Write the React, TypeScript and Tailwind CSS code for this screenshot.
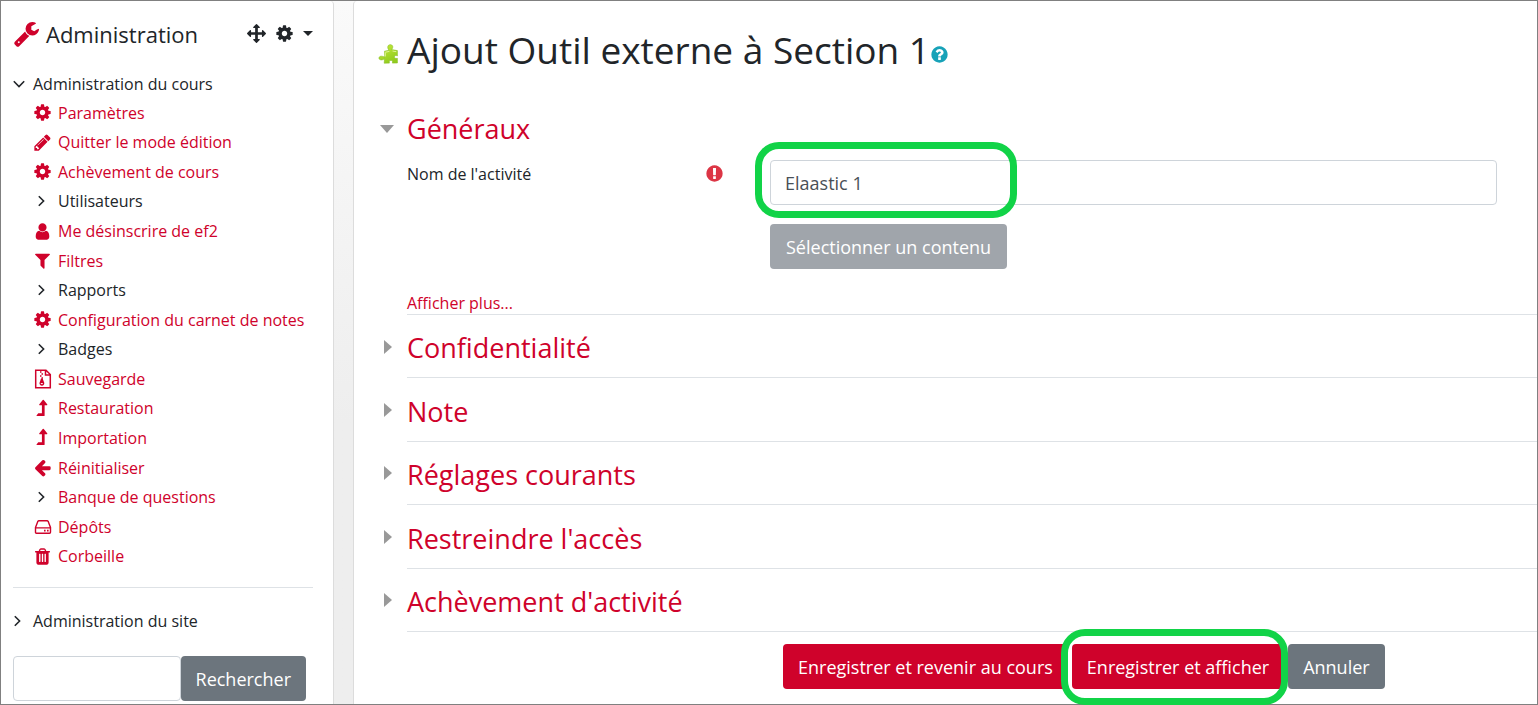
import type { ReactNode } from "react";

const paths = {
  cog: "M1152 896q0-106-75-181t-181-75-181 75-75 181 75 181 181 75 181-75 75-181zm512-109v222q0 12-8 23t-20 13l-185 28q-19 54-39 91 35 50 107 138 10 12 10 25t-9 23q-27 37-99 108t-94 71q-12 0-26-9l-138-108q-44 23-91 38-16 136-29 186-7 28-36 28h-222q-14 0-24.5-8.5t-11.5-21.5l-28-184q-49-16-90-37l-141 107q-10 9-25 9-14 0-25-11-126-114-165-168-7-10-7-23 0-12 8-23 15-21 51-66.5t54-70.5q-27-50-41-99l-183-27q-13-2-21-12.5t-8-23.5v-222q0-12 8-23t19-13l186-28q14-46 39-92-40-57-107-138-10-12-10-24 0-10 9-23 26-36 98.5-107.5t94.5-71.5q13 0 26 10l138 107q44-23 91-38 16-136 29-186 7-28 36-28h222q14 0 24.5 8.5t11.5 21.5l28 184q49 16 90 37l142-107q9-9 24-9 13 0 25 10 129 119 165 170 7 8 7 22 0 12-8 23-15 21-51 66.5t-54 70.5q26 50 41 98l183 28q13 2 21 12.5t8 23.5z",
  arrows:
    "M1792 896q0 26-19 45l-256 256q-19 19-45 19t-45-19-19-45v-128h-384v384h128q26 0 45 19t19 45-19 45l-256 256q-19 19-45 19t-45-19l-256-256q-19-19-19-45t19-45 45-19h128v-384h-384v128q0 26-19 45t-45 19-45-19l-256-256q-19-19-19-45t19-45l256-256q19-19 45-19t45 19 19 45v128h384v-384h-128q-26 0-45-19t-19-45 19-45l256-256q19-19 45-19t45 19l256 256q19 19 19 45t-19 45-45 19h-128v384h384v-128q0-26 19-45t45-19 45 19l256 256q19 19 19 45z",
  pencil:
    "M491 1536l91-91-235-235-91 91v107h128v128h107zm523-928q0-22-22-22-10 0-17 7l-542 542q-7 7-7 17 0 22 22 22 10 0 17-7l542-542q7-7 7-17zm-54-192l416 416-832 832h-416v-416zm683 96q0 53-37 90l-166 166-416-416 166-165q36-38 90-38 53 0 91 38l235 234q37 39 37 91z",
  user: "M1536 1399q0 109-62.5 187t-150.5 78h-854q-88 0-150.5-78t-62.5-187q0-85 8.5-160.5t31.5-152 58.5-131 94-89 134.5-34.5q131 128 313 128t313-128q76 0 134.5 34.5t94 89 58.5 131 31.5 152 8.5 160.5zm-256-887q0 159-112.5 271.5t-271.5 112.5-271.5-112.5-112.5-271.5 112.5-271.5 271.5-112.5 271.5 112.5 112.5 271.5z",
  filter:
    "M1595 295q17 41-14 70l-493 493v742q0 42-39 59-13 5-25 5-27 0-45-19l-256-256q-19-19-19-45v-486l-493-493q-31-29-14-70 17-39 59-39h1280q42 0 59 39z",
  trash:
    "M704 1376v-704q0-14-9-23t-23-9h-64q-14 0-23 9t-9 23v704q0 14 9 23t23 9h64q14 0 23-9t9-23zm256 0v-704q0-14-9-23t-23-9h-64q-14 0-23 9t-9 23v704q0 14 9 23t23 9h64q14 0 23-9t9-23zm256 0v-704q0-14-9-23t-23-9h-64q-14 0-23 9t-9 23v704q0 14 9 23t23 9h64q14 0 23-9t9-23zm-544-992h448l-48-117q-7-9-17-11h-317q-10 2-17 11zm928 32v64q0 14-9 23t-23 9h-96v948q0 83-47 143.5t-113 60.5h-832q-66 0-113-58.5t-47-141.5v-952h-96q-14 0-23-9t-9-23v-64q0-14 9-23t23-9h309l70-167q15-37 54-63t79-26h320q40 0 79 26t54 63l70 167h309q14 0 23 9t9 23z",
  back: "M1664 896v128q0 53-32.5 90.5t-84.5 37.5h-704l293 294q38 36 38 90t-38 90l-75 76q-37 37-90 37-52 0-91-37l-651-652q-37-37-37-90 0-52 37-91l651-650q38-38 91-38 52 0 90 38l75 74q38 38 38 91t-38 91l-293 293h704q52 0 84.5 37.5t32.5 90.5z",
  levelUp:
    "M1345 557q-18 35-57 35h-192v976q0 14-9 23t-23 9h-704q-21 0-29-18-8-20 4-35l160-192q9-11 25-11h320v-752h-192q-40 0-58-37-17-37 9-68l320-384q18-22 49-22t49 22l320 384q27 32 8 70z",
  wrench:
    "M448 1472q0-26-19-45t-45-19-45 19-19 45 19 45 45 19 45-19 19-45zm644-420l-682 682q-37 37-90 37-52 0-91-37l-106-108q-38-36-38-90 0-53 38-91l681-681q39 98 114.5 173.5t173.5 114.5zm634-435q0 39-23 106-47 134-164.5 217.500t-258.500 83.500q-185 0-316.500-131.500t-131.500-316.500 131.500-316.500 316.500-131.500q58 0 121.500 16.500t107.500 46.500q16 11 16 28t-16 28l-293 169v224l193 107q5-3 79-48.500t135.500-81 70.500-35.500q15 0 23.500 10t8.500 25z",
  question:
    "M1024 1376v-192q0-14-9-23t-23-9h-192q-14 0-23 9t-9 23v192q0 14 9 23t23 9h192q14 0 23-9t9-23zm256-672q0-88-55.5-163t-138.5-116-170-41q-243 0-371 213-15 24 8 42l132 100q7 6 19 6 16 0 25-12 53-68 86-92 34-24 86-24 48 0 85.5 26t37.5 59q0 38-20 61t-68 45q-63 28-115.5 86.5t-52.5 125.5v36q0 14 9 23t23 9h192q14 0 23-9t9-23q0-19 21.5-49.5t54.5-49.5q32-18 49-28.5t46-35 44.5-48 28-60.5 12.5-81zm384 192q0 209-103 385.5t-279.5 279.5-385.5 103-385.5-103-279.5-279.5-103-385.5 103-385.5 279.5-279.5 385.5-103 385.5 103 279.5 279.5 103 385.5z",
  exclamation:
    "M896 128q209 0 385.5 103t279.5 279.5 103 385.5-103 385.5-279.5 279.5-385.5 103-385.5-103-279.5-279.5-103-385.5 103-385.5 279.5-279.5 385.5-103zm128 1247v-190q0-14-9-23.5t-22-9.5h-192q-13 0-23 10t-10 23v190q0 13 10 23t23 10h192q13 0 22-9.5t9-23.5zm-2-344l18-621q0-12-10-18-10-8-24-8h-220q-14 0-24 8-10 6-10 18l17 621q0 10 10 17.5t24 7.5h185q14 0 23.5-7.5t10.5-17.5z",
};

type GlyphName = keyof typeof paths;

function Glyph({ name, className = "size-[19px]" }: { name: GlyphName; className?: string }) {
  return (
    <svg viewBox="0 0 1792 1792" fill="currentColor" aria-hidden="true" className={`shrink-0 ${className}`}>
      <path d={paths[name]} />
    </svg>
  );
}

function Chevron({ down = false }: { down?: boolean }) {
  return (
    <svg viewBox="0 0 12 12" fill="none" stroke="#212529" strokeWidth="1.6" aria-hidden="true" className="size-3 shrink-0">
      <path d={down ? "M0.8 3.3 6 8.5 11.2 3.3" : "M1.8 1.2 6.6 6 1.8 10.8"} />
    </svg>
  );
}

function ZipFile() {
  return (
    <svg viewBox="0 0 18 20" fill="none" stroke="currentColor" strokeWidth="1.5" aria-hidden="true" className="h-5 w-[18px] shrink-0">
      <path d="M1.7 1.2H12L16.3 5.5V18.8H1.7zM11.5 1.5V6H16" />
      <path d="M6 3h1.5M7.5 5H9M6 7h1.5M7.5 9H9" strokeWidth="1.3" />
      <path d="M7 9.5h1.6l1.6 4.2a2.4 2.4 0 1 1-4.6 0z" fill="currentColor" stroke="none" />
      <path d="M6.8 14.6h2" stroke="#fff" strokeWidth="1" />
    </svg>
  );
}

function Drive() {
  return (
    <svg viewBox="0 0 18 16" fill="none" stroke="currentColor" strokeWidth="1.4" aria-hidden="true" className="h-4 w-[18px] shrink-0">
      <path d="M1.5 8.5 3.8 2.6Q4.1 1.7 5 1.7h8Q13.9 1.7 14.2 2.6L16.5 8.5v4.8q0 1-1 1h-13q-1 0-1-1zM1.5 8.9h15" />
      <path d="M10 11.6h1.6M13 11.6h1.6" strokeWidth="1.6" />
    </svg>
  );
}

function Puzzle() {
  return (
    <svg viewBox="0 0 20 22" aria-hidden="true" className="h-[22px] w-5 shrink-0">
      <defs>
        <linearGradient id="puzzle-fill" x1="0" y1="0" x2="0.5" y2="1">
          <stop offset="0" stopColor="#c8ec3c" />
          <stop offset="1" stopColor="#92cc1e" />
        </linearGradient>
      </defs>
      <path
        d="M6.500 8.200 11 7.300C9.600 5.800 9.300 3.500 10.500 2.300c1.100-1.100 3.300-.8 4 .5.600 1.300.1 2.600-.9 3.800l5.800 1v5.300c-1.300-.7-2.700-.5-3 .8-.3 1.500 1.200 2 3 1.600v4.700l-5 .1c.4-1.500.1-2.800-1.400-2.800s-2.100 1.300-1.600 2.800l-5.200.1.300-4.400c-1.500 1.300-3.800 1.500-5.100.4-.8-.8-.5-2.300.7-2.800 1.500-.6 3.200.2 4.600.6z"
        fill="url(#puzzle-fill)"
        stroke="#86bd22"
        strokeWidth="0.6"
      />
      <path d="M7.400 9.200l4-.8M14.500 8l3.800.7M7.300 9.500v4" stroke="#e6f7a0" strokeWidth="0.900" fill="none" />
    </svg>
  );
}

type Entry = { label: string; icon: ReactNode; plain?: boolean };

const entries: Entry[] = [
  { label: "Paramètres", icon: <Glyph name="cog" /> },
  { label: "Quitter le mode édition", icon: <Glyph name="pencil" /> },
  { label: "Achèvement de cours", icon: <Glyph name="cog" /> },
  { label: "Utilisateurs", icon: <Chevron />, plain: true },
  { label: "Me désinscrire de ef2", icon: <Glyph name="user" /> },
  { label: "Filtres", icon: <Glyph name="filter" /> },
  { label: "Rapports", icon: <Chevron />, plain: true },
  { label: "Configuration du carnet de notes", icon: <Glyph name="cog" /> },
  { label: "Badges", icon: <Chevron />, plain: true },
  { label: "Sauvegarde", icon: <ZipFile /> },
  { label: "Restauration", icon: <Glyph name="levelUp" /> },
  { label: "Importation", icon: <Glyph name="levelUp" /> },
  { label: "Réinitialiser", icon: <Glyph name="back" /> },
  { label: "Banque de questions", icon: <Chevron /> },
  { label: "Dépôts", icon: <Drive /> },
  { label: "Corbeille", icon: <Glyph name="trash" /> },
];

const sections = ["Confidentialité", "Note", "Réglages courants", "Restreindre l'accès", "Achèvement d'activité"];

function Sidebar() {
  return (
    <aside className="w-[333px] shrink-0 rounded-tr border-r border-[#dcdcdc] bg-white px-3">
      <header className="flex h-[68px] items-center">
        <Glyph name="wrench" className="mb-1 size-[27px] text-[#cf022b]" />
        <h2 className="ml-[6px] pb-[2px] text-[22px]">Administration</h2>
        <div className="ml-auto flex items-center gap-[9px] pr-2 pb-1">
          <button type="button" aria-label="Déplacer">
            <Glyph name="arrows" />
          </button>
          <button type="button" aria-label="Actions" className="flex items-center gap-[9px]">
            <Glyph name="cog" />
            <svg viewBox="0 0 10 5" fill="currentColor" aria-hidden="true" className="h-[5px] w-2.5">
              <path d="M0 0h10L5 5z" />
            </svg>
          </button>
        </div>
      </header>
      <nav aria-label="Administration">
        <button type="button" className="flex h-[29px] items-center gap-2">
          <Chevron down />
          Administration du cours
        </button>
        <ul className="grid h-[473px] auto-rows-fr">
          {entries.map((e) => (
            <li key={e.label} className="flex items-center pl-5">
              <a href="#" className={`flex items-center gap-[6px] ${e.plain ? "" : "text-[#cf022b]"}`}>
                <span className="flex w-[19px] justify-center">{e.icon}</span>
                {e.label}
              </a>
            </li>
          ))}
        </ul>
        <hr className="mt-4 mr-2 border-[#dee2e6]" />
        <button type="button" className="mt-[19px] flex h-[28px] items-center gap-2 text-left">
          <Chevron />
          Administration du site
        </button>
      </nav>
      <form className="mt-[21px] mr-[15px] flex" onSubmit={(e) => e.preventDefault()}>
        <input
          type="text"
          aria-label="Rechercher dans l'administration"
          className="h-[45px] min-w-0 flex-1 rounded border border-[#ced4da] px-[15px] text-lg"
        />
        <button type="submit" className="h-[45px] rounded bg-[#6c757d] px-[15px] text-lg text-white">
          Rechercher
        </button>
      </form>
    </aside>
  );
}

export default function App() {
  return (
    <div className="flex min-h-screen border border-[#808080] bg-linear-to-b from-[#fafafa] to-[#eeeeee] to-60% font-['Open_Sans',sans-serif] text-base text-[#212529]">
      <Sidebar />
      <main className="ml-[19px] min-w-0 flex-1 rounded-tl border-l border-[#dcdcdc] bg-white pl-6">
        <div className="flex h-[100px] items-center pb-[2px]">
          <div className="w-[29px] pt-2">
            <Puzzle />
          </div>
          <h1 className="text-[37px]">Ajout Outil externe à Section 1</h1>
          <button type="button" aria-label="Aide" className="mt-2 text-[#17a2b8]">
            <Glyph name="question" />
          </button>
        </div>
        <form onSubmit={(e) => e.preventDefault()}>
          <section>
            <button type="button" className="flex h-[56px] items-center text-[27px] text-[#cf022b]">
              <span className="flex w-[29px] pl-[2px]">
                <svg viewBox="0 0 14 8" aria-hidden="true" className="h-2 w-3.5">
                  <path d="M0 0h14L7 8z" fill="#999" />
                </svg>
              </span>
              Généraux
            </button>
            <div className="ml-[29px] grid grid-cols-[363px_1fr] pr-10">
              <div className="flex h-[33px] items-center justify-between pr-[46px]">
                <label htmlFor="activity">Nom de l'activité</label>
                <Glyph name="exclamation" className="size-[19px] text-[#dc3545]" />
              </div>
              <div>
                <div className="relative mt-[3px]">
                  <input
                    id="activity"
                    type="text"
                    defaultValue="Elaastic 1"
                    className="block h-[45px] w-full rounded border border-[#ced4da] px-[14px] text-lg text-[#495057]"
                  />
                  <span className="pointer-events-none absolute -top-[18px] -left-[15px] h-[76px] w-[262px] rounded-3xl border-[7px] border-[#11d347]" />
                </div>
                <button type="button" className="mt-[19px] block h-[45px] rounded bg-[#a0a5ab] px-4 text-lg text-white">
                  Sélectionner un contenu
                </button>
              </div>
            </div>
            <div className="ml-[29px] flex h-[46px] items-end border-b border-[#dee2e6]">
              <a href="#" className="leading-[22px] text-[#cf022b]">
                Afficher plus...
              </a>
            </div>
          </section>
          <div className="grid h-[317px] auto-rows-fr">
            {sections.map((s) => (
              <section key={s} className="flex">
                <span className="flex w-[29px] items-center pl-[6px]">
                  <svg viewBox="0 0 8 14" aria-hidden="true" className="h-3.5 w-2">
                    <path d="M0 0v14l8-7z" fill="#999" />
                  </svg>
                </span>
                <h3 className="flex flex-1 items-center border-b border-[#dee2e6] pt-[5px] text-[27px]">
                  <a href="#" className="text-[#cf022b]">
                    {s}
                  </a>
                </h3>
              </section>
            ))}
          </div>
          <div className="mt-3 ml-[405px] flex text-lg text-white">
            <button type="submit" className="h-[45px] rounded bg-[#cf022b] px-[15px]">
              Enregistrer et revenir au cours
            </button>
            <span className="relative ml-1">
              <button type="submit" className="block h-[45px] rounded bg-[#cf022b] px-[15px]">
                Enregistrer et afficher
              </button>
              <span className="pointer-events-none absolute -top-[15px] -right-[4px] -bottom-4 -left-[11px] rounded-3xl border-[7px] border-[#11d347]" />
            </span>
            <button type="button" className="ml-1 h-[45px] rounded bg-[#6c757d] px-[15px]">
              Annuler
            </button>
          </div>
        </form>
      </main>
    </div>
  );
}
